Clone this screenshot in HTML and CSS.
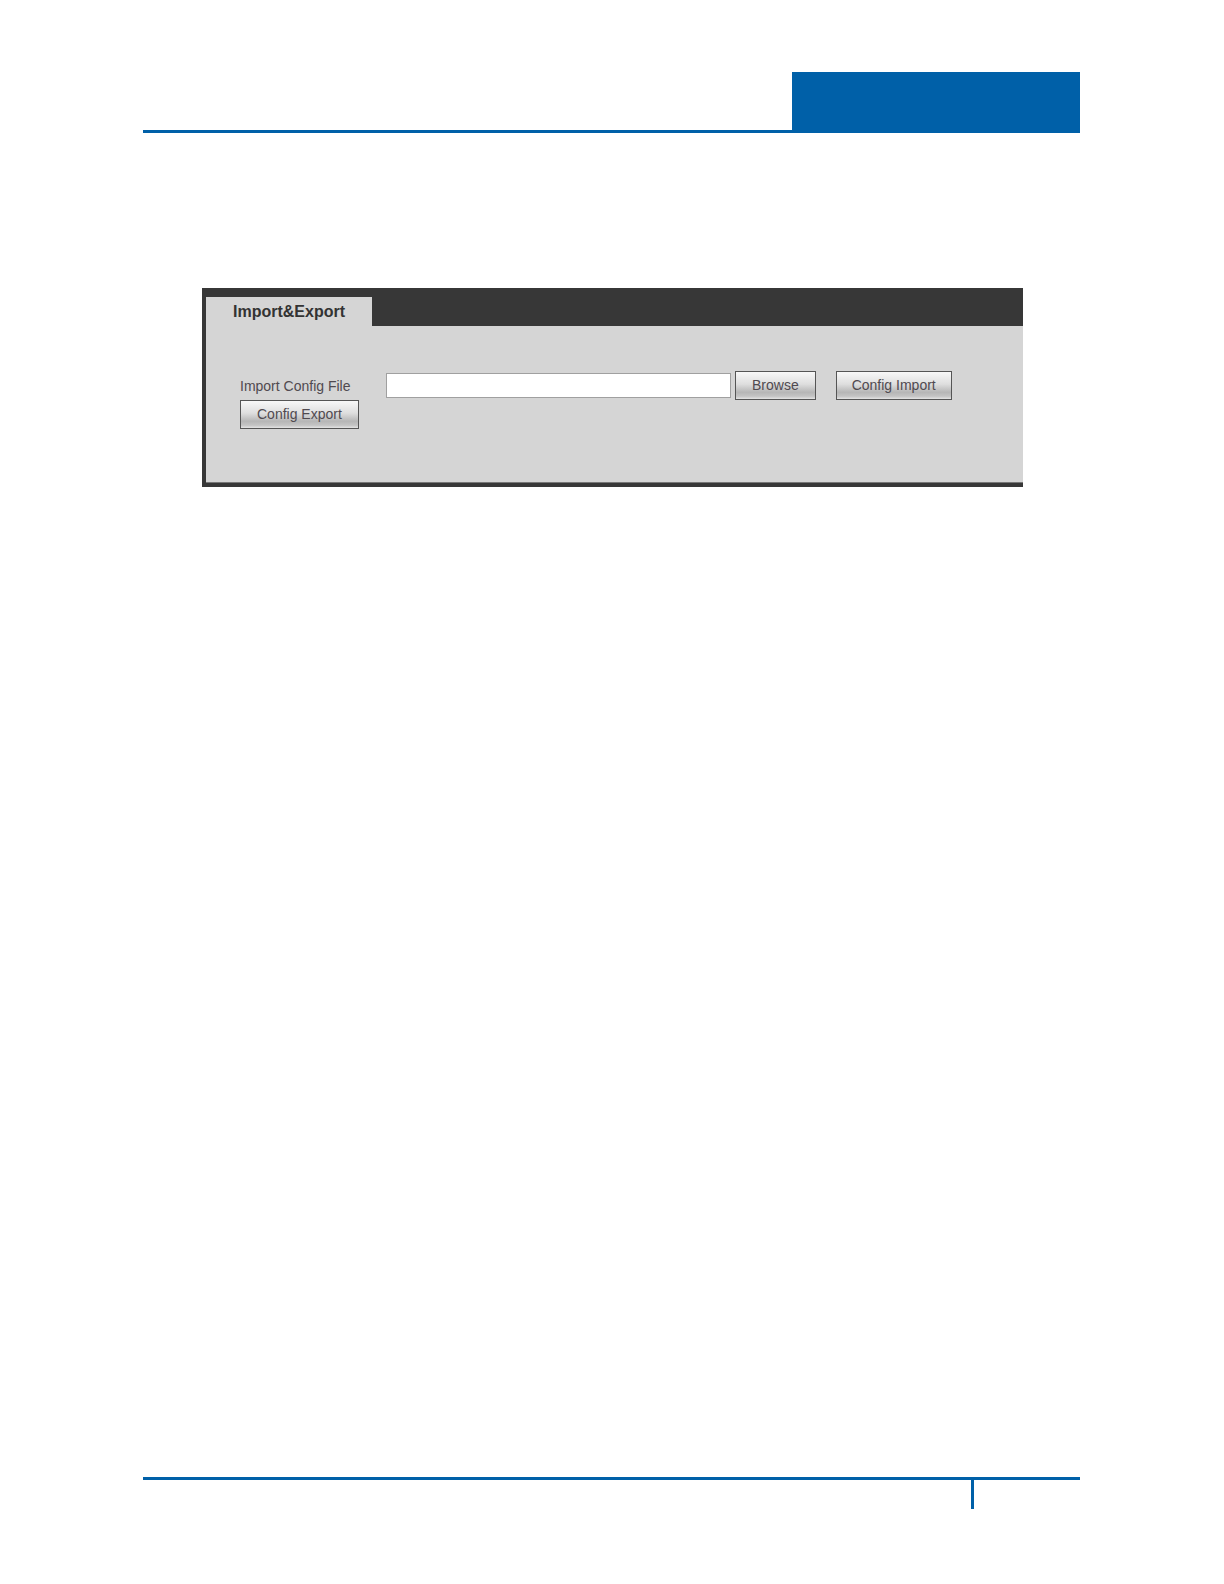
FILE: index.html
```html
<!DOCTYPE html>
<html lang="en">
<head>
<meta charset="utf-8">
<meta name="viewport" content="width=device-width, initial-scale=1">
<title>Import&amp;Export</title>
<link rel="stylesheet" href="styles.css">
</head>
<body>
<div class="page">
  <header class="page-header">
    <div class="header-block"></div>
  </header>
  <main class="content">
    <section class="panel">
      <nav class="tabs">
        <button type="button" class="tab">Import&amp;Export</button>
      </nav>
      <form class="panel-body">
        <div class="row">
          <label class="label" for="config-file">Import Config File</label>
          <input class="file-path" id="config-file" type="text">
          <button type="button" class="button browse">Browse</button>
          <button type="button" class="button">Config Import</button>
        </div>
        <button type="button" class="button export">Config Export</button>
      </form>
    </section>
  </main>
  <footer class="page-footer">
    <div class="page-number"></div>
  </footer>
</div>
</body>
</html>
```

FILE: styles.css
```css
* {
  box-sizing: border-box;
}

body {
  margin: 0;
  background: #fff;
  font-family: "Liberation Sans", Arial, sans-serif;
  font-size: 14px;
}

.page {
  display: flex;
  flex-direction: column;
  min-height: 100vh;
  padding: 72px 144px 75px 143px;
}

.page-header {
  display: flex;
  justify-content: flex-end;
  border-bottom: 3px solid #0060a8;
}

.header-block {
  width: 288px;
  height: 58px;
  background: #0060a8;
}

.content {
  flex: 1;
  padding: 155px 57px 40px 59px;
}

.panel {
  padding: 9px 0 4px 4px;
  background: #373737;
}

.tabs {
  display: flex;
}

.tab {
  height: 29px;
  padding: 0 27px;
  border: 0;
  background: #d5d5d5;
  color: #333;
  font: bold 16px/29px "Liberation Sans", Arial, sans-serif;
}

.panel-body {
  padding: 45px 34px 53px;
  border-bottom: 1px solid #777;
  background: #d5d5d5;
}

.row {
  display: flex;
  align-items: center;
}

.label {
  width: 146px;
  color: #504a50;
}

.file-path {
  flex: 0 1 345px;
  min-width: 0;
  height: 25px;
  border: 1px solid #a0a0a0;
  background: #fff;
}

.button {
  display: block;
  height: 29px;
  padding: 0 15px;
  border: 1px solid #555;
  background: linear-gradient(#f8f8f8, #dedede 45%, #b6b6b6 75%, #c4c4c4 90%, #e4e4e4);
  color: #504a50;
  font: 14px/27px "Liberation Sans", Arial, sans-serif;
}

.browse {
  margin: 0 20px 0 4px;
  padding: 0 16px;
}

.export {
  padding: 0 16px;
}

.page-footer {
  display: flex;
  justify-content: flex-end;
  border-top: 3px solid #0060a8;
}

.page-number {
  width: 109px;
  height: 29px;
  border-left: 3px solid #0060a8;
}
```
